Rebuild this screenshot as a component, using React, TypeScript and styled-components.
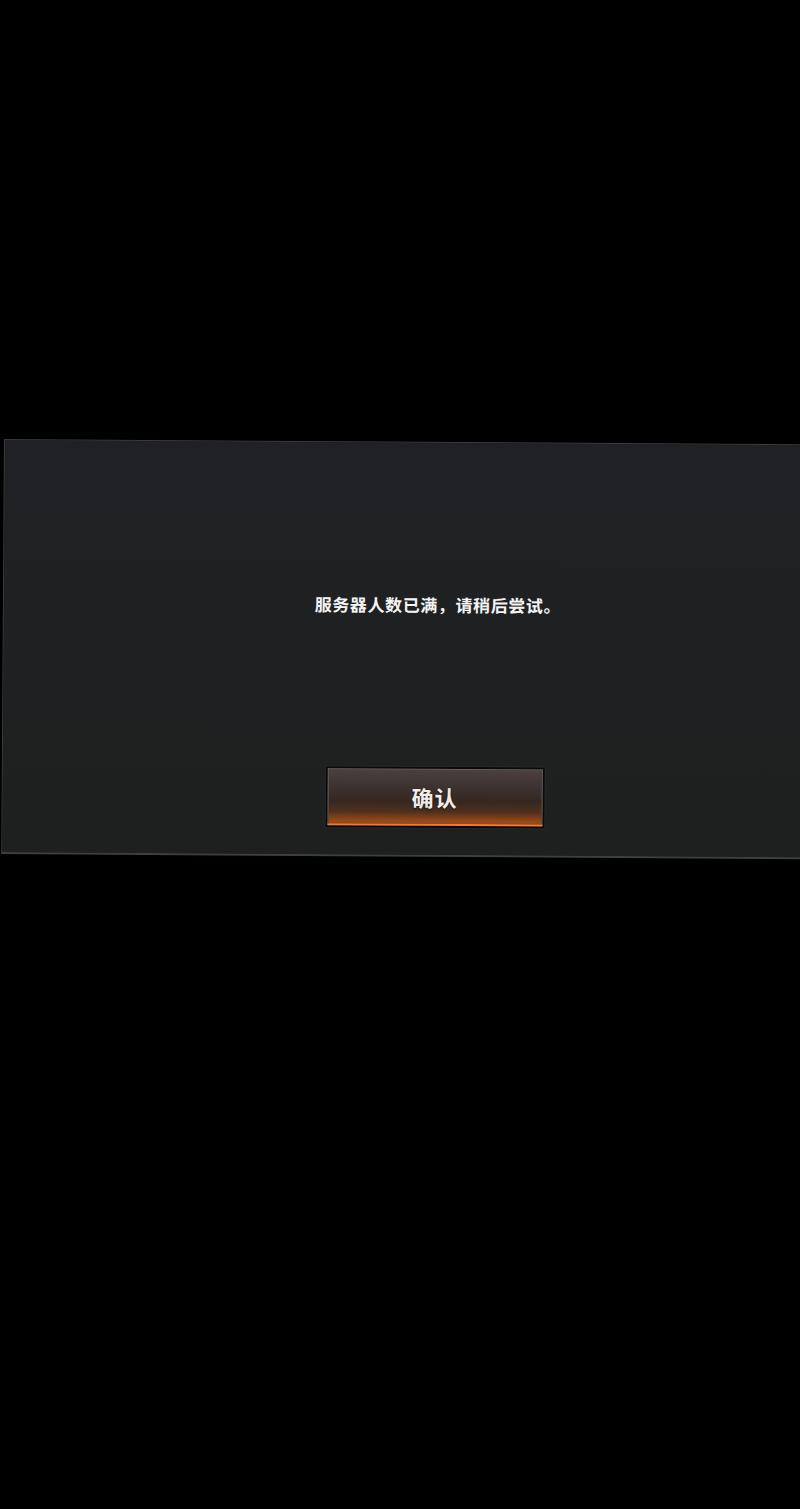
import React from "react";
import styled, { createGlobalStyle } from "styled-components";

const GlobalStyle = createGlobalStyle`
  html, body {
    margin: 0;
    padding: 0;
    background: #000;
    overflow: hidden;
  }
  body {
    font-family: "Noto Sans CJK SC", "Noto Sans", sans-serif;
  }
`;

const Screen = styled.div`
  width: 800px;
  height: 1509px;
  background: #000;
  overflow: hidden;
  padding-top: 439px;
  box-sizing: border-box;
`;

const Dialog = styled.div`
  width: 862px;
  height: 415px;
  margin-left: 4px;
  box-sizing: border-box;
  background: linear-gradient(180deg, #202124 0%, #1f2021 60%, #1e201f 100%);
  border: 1px solid #3a3b3d;
  border-bottom: 2px solid #3d3f40;
  transform: rotate(0.38deg);
  transform-origin: left top;
  display: flex;
  flex-direction: column;
  align-items: center;
  padding-top: 150px;
`;

const Message = styled.div`
  color: #f4f4f4;
  font-size: 17px;
  font-weight: 700;
  letter-spacing: 0.6px;
  line-height: 24px;
  margin-left: 8px;
`;

const ConfirmButton = styled.button`
  margin-top: 150px;
  margin-left: 4px;
  width: 219px;
  height: 61px;
  box-sizing: border-box;
  border: 2px solid #0b0a0a;
  outline: 1px solid #2a2727;
  background: #0b0a0a;
  padding: 0;
  cursor: pointer;
  display: flex;
`;

const ButtonFace = styled.span`
  flex: 1;
  display: flex;
  align-items: center;
  justify-content: center;
  border: 1px solid #6b615e;
  border-bottom: 2px solid #f07a34;
  background: linear-gradient(
    180deg,
    #4b403d 0%,
    #3b312e 35%,
    #352720 58%,
    #50301c 78%,
    #9a4818 95%
  );
  color: #f1ecea;
  font-family: "Noto Sans CJK SC", sans-serif;
  font-size: 22px;
  font-weight: 700;
  letter-spacing: 1px;
  text-shadow: 0 1px 2px rgba(0, 0, 0, 0.6);
`;

export default function App() {
  return (
    <Screen>
      <GlobalStyle />
      <Dialog>
        <Message>服务器人数已满，请稍后尝试。</Message>
        <ConfirmButton>
          <ButtonFace>确认</ButtonFace>
        </ConfirmButton>
      </Dialog>
    </Screen>
  );
}
